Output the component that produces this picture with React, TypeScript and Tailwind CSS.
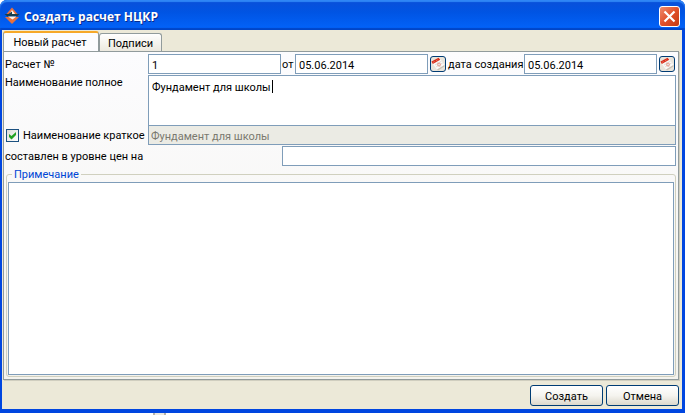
import { useState } from "react";

const FIELD =
  "block min-w-0 rounded-none border border-[#7f9db9] bg-white px-[3px] pt-0.5 text-black outline-none";

function AppIcon() {
  return (
    <svg width="16" height="18" viewBox="0 0 16 18" aria-hidden="true" className="mt-px">
      <path d="M8 0.5 L14 7.5 H2 Z" fill="#e9703c" />
      <path d="M8 3 L11.5 7.5 H5 Z" fill="#fff4e8" />
      <path d="M4.5 7 L8 4.5 V7 Z" fill="#173f4c" />
      <path d="M0.5 7 H15.5 L13 9.5 H3.5 Z" fill="#173f4c" />
      <path d="M1 10 H15 L8 17 Z" fill="#e9703c" />
      <path d="M4 9.5 H12.5 L8.5 12.5 Z" fill="#fff4e8" />
    </svg>
  );
}

function CalendarButton({ label }: { label: string }) {
  return (
    <button
      type="button"
      aria-label={label}
      className="mx-0.5 flex h-4 w-4 shrink-0 items-center justify-center overflow-hidden rounded-[3px] border border-[#003c74] bg-[#e9e4da]"
    >
      <svg width="14" height="14" viewBox="0 0 14 14" aria-hidden="true" className="shrink-0">
        <path d="M1 6 L9 1.5 L13.5 8 L6 12.5 Z" fill="#fbf9f6" />
        <path d="M6 12.5 L13.5 8 V9.5 L7 13.5 Z" fill="#c9c1b4" />
        <path d="M0.5 4.5 L7.5 0.8 L9.3 2.8 L1.8 7 Z" fill="#d8301c" />
        <path d="M2.4 5.2 L3.4 4.6 M5.4 3.6 L6.4 3" stroke="#f7a89a" strokeWidth="0.8" />
        <path d="M4 8 L10.5 4.2 M5.2 9.8 L11.6 6 M6.4 5.4 L9.2 10" stroke="#d3ccc5" strokeWidth="0.7" />
        <circle cx="8" cy="7.6" r="1.5" fill="none" stroke="#e88a7a" strokeWidth="0.8" />
      </svg>
    </button>
  );
}

function DialogButton({ children }: { children: string }) {
  return (
    <button
      type="button"
      className="h-[21px] w-[73px] rounded-[3px] border border-[#003c74] bg-linear-to-b from-white via-[#f5f4ef] to-[#dcd8cc] pt-0.5 leading-[17px]"
    >
      {children}
    </button>
  );
}

export default function App() {
  const [short, setShort] = useState(true);
  return (
    <div className="flex min-h-screen flex-col bg-white font-['Roboto','Liberation_Sans',sans-serif] text-[11px] leading-[14px] text-black">
      <div className="flex flex-1 flex-col rounded-t-[7px] bg-[#0046e0]">
        <header className="flex h-[30px] items-center rounded-t-[7px] bg-linear-to-b from-[#0a4fd8] from-0% via-[#0054e3] via-40% to-[#0364fb] pr-[5px] pl-1 shadow-[inset_0_2px_1px_#2f86f5,inset_0_-2px_1px_#0045c8]">
          <AppIcon />
          <h1 className="ml-1 flex-1 pt-1 font-['Open_Sans','Noto_Sans',sans-serif] text-[12px] leading-4 font-bold text-white [text-shadow:1px_1px_0_#0a2a8c]">
            Создать расчет НЦКР
          </h1>
          <button
            type="button"
            aria-label="Закрыть"
            className="mt-0.5 flex h-[21px] w-[21px] items-center justify-center rounded-[3px] border border-white bg-linear-to-br from-[#ee8a6c] via-[#e0502a] to-[#c63a10]"
          >
            <svg width="13" height="13" viewBox="0 0 13 13" aria-hidden="true">
              <path d="M1.5 1.5 L11.5 11.5 M11.5 1.5 L1.5 11.5" stroke="#fff" strokeWidth="2.2" />
            </svg>
          </button>
        </header>

        <div className="mr-[3px] mb-1 ml-0.5 flex flex-1 flex-col bg-[#ece9d8] pl-px">
          <div role="tablist" className="flex h-[21px] items-end">
            <button
              type="button"
              role="tab"
              aria-selected="true"
              className="-mb-px h-[21px] w-24 rounded-t-[3px] border-x border-t-2 border-x-[#919b9c] border-t-[#f6a828] bg-[#fcfcfe] pr-0.5 leading-[17px]"
            >
              Новый расчет
            </button>
            <button
              type="button"
              role="tab"
              aria-selected="false"
              className="h-[18px] w-[63px] rounded-t-[3px] border-x border-t border-[#919b9c] bg-linear-to-b from-white to-[#ece9df] pt-px leading-[17px]"
            >
              Подписи
            </button>
          </div>

          <main className="mr-[3px] flex flex-1 flex-col border border-[#919b9c] bg-linear-to-b from-[#fcfcfe] to-[#f4f3ee] pt-0.5 pl-px shadow-[1px_1px_0_#d0cebf]">
            <div className="mr-px flex h-5 items-center">
              <label htmlFor="number" className="w-[143px] shrink-0 pt-0.5">
                Расчет №
              </label>
              <input id="number" defaultValue="1" className={`${FIELD} h-5 flex-1`} />
              <label htmlFor="date" className="w-[14px] shrink-0 pt-0.5 pl-px whitespace-nowrap">
                от
              </label>
              <input id="date" defaultValue="05.06.2014" className={`${FIELD} h-5 flex-1`} />
              <CalendarButton label="Выбрать дату" />
              <label htmlFor="created" className="w-[76px] shrink-0 pt-0.5 whitespace-nowrap">
                дата создания
              </label>
              <input id="created" defaultValue="05.06.2014" className={`${FIELD} h-5 flex-1`} />
              <CalendarButton label="Выбрать дату создания" />
            </div>

            <div className="mt-px mr-0.5 flex">
              <label htmlFor="full" className="w-[143px] shrink-0 pt-px whitespace-nowrap">
                Наименование полное
              </label>
              <div className="relative flex-1">
                <textarea
                  id="full"
                  defaultValue="Фундамент для школы "
                  className={`${FIELD} h-[50px] w-full resize-none border-b-0 pt-[5px]`}
                />
                <span className="absolute top-[5px] left-[124px] h-[13px] w-px bg-black" />
              </div>
            </div>

            <div className="mr-0.5 flex h-5 items-center">
              <label className="flex w-[143px] shrink-0 items-center whitespace-nowrap">
                <span className="relative mr-1 ml-px block h-[13px] w-[13px]">
                  <input
                    type="checkbox"
                    checked={short}
                    onChange={(e) => setShort(e.target.checked)}
                    className="peer block h-[13px] w-[13px] appearance-none border border-[#1c5180] bg-linear-to-br from-[#dcdcd7] to-white"
                  />
                  <svg
                    width="13"
                    height="13"
                    viewBox="0 0 13 13"
                    aria-hidden="true"
                    className="pointer-events-none absolute inset-0 hidden peer-checked:block"
                  >
                    <path d="M3 5 L5.5 7 L10 3 V6 L5.5 10.5 L3 8 Z" fill="#21a121" />
                  </svg>
                </span>
                <span className="pt-0.5">Наименование краткое</span>
              </label>
              <input
                aria-label="Наименование краткое"
                disabled
                defaultValue="Фундамент для школы"
                className="block h-5 min-w-0 flex-1 border border-[#7f9db9] bg-[#ebebe4] px-0.5 pt-0.5 text-[#7a796f]"
              />
            </div>

            <div className="mt-px mr-0.5 flex h-5 items-center">
              <label htmlFor="level" className="w-[277px] shrink-0 pt-0.5">
                составлен в уровне цен на
              </label>
              <input id="level" className={`${FIELD} h-5 flex-1`} />
            </div>

            <fieldset className="mr-0.5 mb-0.5 ml-px flex-1 rounded-[3px] border border-[#d0d0bf] px-px pb-px">
              <legend className="ml-1 h-4 px-0.5 pt-0.5 text-[#0046d5]">
                <label htmlFor="note">Примечание</label>
              </legend>
              <textarea
                id="note"
                className={`${FIELD} h-[calc(100vh-222px)] min-h-12 w-full resize-none`}
              />
            </fieldset>
          </main>

          <footer className="flex justify-end gap-[3px] pt-[5px] pr-[3px] pb-[3px]">
            <DialogButton>Создать</DialogButton>
            <DialogButton>Отмена</DialogButton>
          </footer>
        </div>
      </div>
      <div className="h-0.5 bg-white pl-[153px]">
        <div className="h-0.5 w-[13px] border-x-2 border-[#b5b3ab] bg-[#ece9e0]" />
      </div>
    </div>
  );
}
